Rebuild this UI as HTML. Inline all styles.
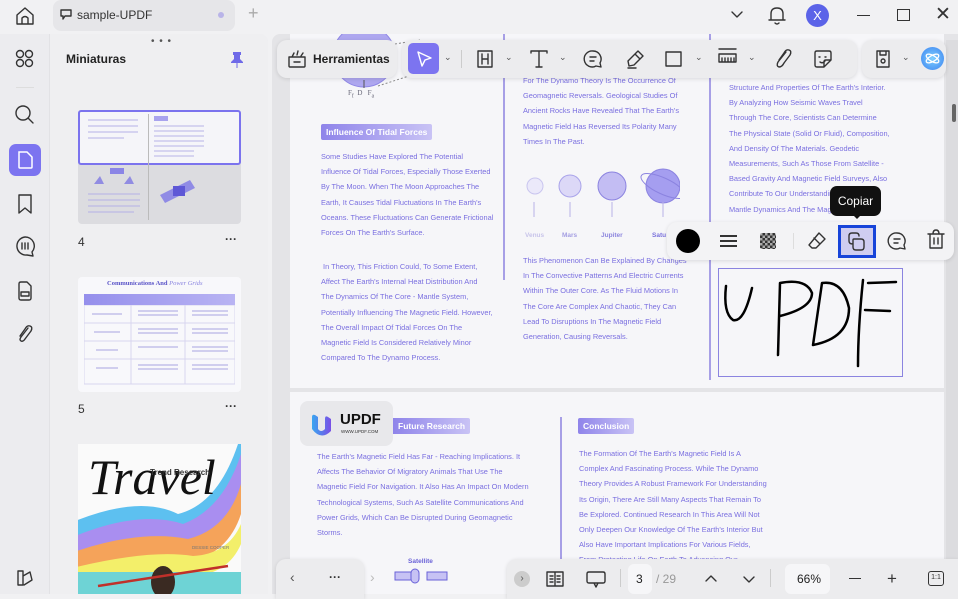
<!DOCTYPE html>
<html><head><meta charset="utf-8"><style>
*{margin:0;padding:0;box-sizing:border-box}
body{width:958px;height:594px;overflow:hidden;background:#f1f1f3;font-family:"Liberation Sans",sans-serif;position:relative}
.a{position:absolute}
.t{color:#7a6fe0;font-size:7.4px;line-height:15.2px;white-space:nowrap}
.h{background:linear-gradient(90deg,#8f84ea,#c9c3f5);color:#fff;font-weight:bold;font-size:8.5px;padding:3px 5px;border-radius:2px}
.ic{stroke:#333;fill:none;stroke-width:1.4;stroke-linecap:round;stroke-linejoin:round}
.bar{background:#ececee;border-radius:10px;box-shadow:0 1px 4px rgba(0,0,0,.12)}
</style></head><body>
<!-- top bar -->
<svg class="a" style="left:14px;top:6px" width="22" height="20"><path class="ic" d="M3 9 L11 2 L19 9 V18 H3Z M8 18 V12 Q11 9 14 12 V18"/></svg>
<div class="a" style="left:53px;top:0;width:182px;height:31px;background:#e6e6e9;border-radius:8px"></div>
<svg class="a" style="left:60px;top:9px" width="12" height="12"><path class="ic" stroke-width="1" d="M1 1 H11 V7 H5 L3 10 V7 H1Z"/></svg>
<div class="a" style="left:77px;top:8px;font-size:12px;color:#333">sample-UPDF</div>
<div class="a" style="left:218px;top:12px;width:6px;height:6px;border-radius:3px;background:#b9b4e8"></div>
<div class="a" style="left:248px;top:3px;font-size:18px;color:#aaa;font-weight:200">+</div>
<svg class="a" style="left:730px;top:10px" width="14" height="10"><path class="ic" d="M2 2 L7 7 L12 2"/></svg>
<svg class="a" style="left:767px;top:5px" width="20" height="22"><path class="ic" d="M4 15 V9 Q4 3 10 3 Q16 3 16 9 V15 H4 M2 15 H18 M8 18 Q10 20 12 18"/></svg>
<div class="a" style="left:806px;top:4px;width:23px;height:23px;border-radius:12px;background:#5b63e8;color:#fff;font-size:13px;text-align:center;line-height:23px">X</div>
<div class="a" style="left:857px;top:15px;width:13px;height:1.4px;background:#333"></div>
<div class="a" style="left:897px;top:9px;width:13px;height:12px;border:1.4px solid #333"></div>
<div class="a" style="left:935px;top:3px;font-size:19px;color:#333">✕</div>
<!-- left rail -->
<div class="a" style="left:0;top:34px;width:268px;height:560px;background:#ececef;border-radius:0 8px 0 0"></div>
<div class="a" style="left:49px;top:34px;width:219px;height:560px;background:#efeff1;border-left:1px solid #e2e2e5;border-radius:0 8px 0 0"></div>
<svg class="a" style="left:15px;top:49px" width="20" height="20"><g class="ic" stroke-width="1.2"><circle cx="5" cy="5" r="3.5"/><circle cx="14" cy="5" r="3.5"/><circle cx="5" cy="14" r="3.5"/><circle cx="14" cy="14" r="3.5"/></g></svg>
<div class="a" style="left:16px;top:87px;width:18px;height:1px;background:#ddd"></div>
<svg class="a" style="left:14px;top:104px" width="22" height="22"><path class="ic" d="M9 2 A7 7 0 1 0 9 16 A7 7 0 1 0 9 2 M14 14 L19 19"/></svg>
<div class="a" style="left:9px;top:144px;width:32px;height:32px;border-radius:7px;background:#7c74f0"></div>
<svg class="a" style="left:15px;top:149px" width="20" height="22"><path stroke="#fff" fill="none" stroke-width="1.5" d="M4 3 H12 L17 8 V18 Q17 19 16 19 H5 Q4 19 4 18Z"/></svg>
<svg class="a" style="left:16px;top:193px" width="18" height="22"><path class="ic" d="M3 2 H15 V20 L9 15 L3 20Z"/></svg>
<svg class="a" style="left:13px;top:235px" width="24" height="24"><path class="ic" d="M12 2 A9 9 0 1 0 14 20 L20 21 L19 17 A9 9 0 0 0 12 2 M9 8 V14 M12 8 V14 M15 8 V14"/></svg>
<svg class="a" style="left:16px;top:280px" width="18" height="22"><path class="ic" d="M3 4 Q3 2 5 2 H11 L15 6 V18 Q15 20 13 20 H5 Q3 20 3 18Z M5 12 H13 V16 H5Z"/></svg>
<svg class="a" style="left:15px;top:323px" width="20" height="22"><path class="ic" d="M13 5 L6 14 Q4 17 6 18 Q8 19 10 16 L16 8 Q18 4 15 3 Q12 2 10 6 L5 13"/></svg>
<svg class="a" style="left:15px;top:568px" width="20" height="20"><path class="ic" d="M3 3 H8 V17 H3Z M8 8 L15 4 L17 12 L9 17"/></svg>
<div class="a" style="left:151px;top:36px;font-size:10px;color:#555;letter-spacing:1px">• • •</div>
<div class="a" style="left:66px;top:52px;font-size:12px;font-weight:bold;color:#222">Miniaturas</div>
<svg class="a" style="left:229px;top:51px" width="16" height="18"><path fill="#6f6ae8" d="M4 1 H12 V4 H11 V8 L14 11 V12 H2 V11 L5 8 V4 H4Z"/><path stroke="#6f6ae8" d="M8 12 V17"/></svg>
<!-- thumb 4 -->
<div class="a" style="left:78px;top:110px;width:163px;height:114px;background:#dcdce0;border-radius:4px"></div>
<div class="a" style="left:78px;top:110px;width:163px;height:55px;background:#f5f5f9;border:2px solid #7b73ee;border-radius:3px"></div>
<div class="a" style="left:148px;top:114px;width:1px;height:106px;background:#bbb"></div>
<svg class="a" style="left:155px;top:170px" width="50" height="45"><path fill="#7d77e6" d="M5 25 L35 10 L40 18 L10 33Z" opacity=".8"/><rect x="18" y="16" width="12" height="10" fill="#5e57d6"/></svg>
<svg class="a" style="left:84px;top:116px" width="60" height="100"><g stroke="#b5b1e6" stroke-width="1"><path d="M4 4 H54 M4 10 H54 M4 16 H54 M4 22 H40 M4 78 H56 M4 84 H56 M4 90 H56 M4 96 H50"/></g><rect x="26" y="52" width="14" height="6" fill="#8b85e6"/><path d="M10 68 L16 60 L20 68Z M40 68 L46 60 L50 68Z" fill="#918ce2"/></svg>
<svg class="a" style="left:154px;top:116px" width="80" height="45"><rect x="0" y="0" width="14" height="5" fill="#a8a3ee"/><g stroke="#b8b4e6" stroke-width="1"><path d="M0 10 H50 M0 15 H50 M0 20 H50 M0 25 H50 M0 30 H50 M0 35 H40 M0 40 H40"/></g></svg>
<div class="a" style="left:78px;top:235px;font-size:12px;color:#333">4</div>
<div class="a" style="left:225px;top:232px;font-size:12px;color:#333;font-weight:bold">···</div>
<!-- thumb 5 -->
<div class="a" style="left:78px;top:277px;width:163px;height:115px;background:#f8f8fb;border-radius:4px"></div>
<div class="a" style="left:107px;top:280px;font-size:6.5px;font-weight:bold;color:#5a54c8;font-family:'Liberation Serif',serif">Communications And <i style="color:#8a84e0;font-weight:normal">Power Grids</i></div>
<div class="a" style="left:84px;top:294px;width:151px;height:11px;background:linear-gradient(90deg,#958fec,#b9b4f3)"></div>
<svg class="a" style="left:84px;top:305px" width="151" height="80"><g stroke="#d8d6ef" fill="none"><rect x="0" y="0" width="151" height="79"/><path d="M0 18 H151 M0 36 H151 M0 54 H151 M47 0 V79 M101 0 V79"/></g><g stroke="#a9a4e0"><path d="M8 9 H38 M54 6 H94 M54 10 H94 M108 6 H144 M108 10 H144 M10 27 H36 M54 24 H94 M54 28 H94 M108 24 H144 M108 28 H144 M12 45 H34 M54 42 H94 M108 42 H144 M108 46 H144 M12 63 H34 M54 60 H94 M54 64 H94 M108 60 H144 M108 64 H144"/></g></svg>
<div class="a" style="left:78px;top:402px;font-size:12px;color:#333">5</div>
<div class="a" style="left:225px;top:399px;font-size:12px;color:#333;font-weight:bold">···</div>
<!-- thumb travel -->
<div class="a" style="left:78px;top:444px;width:163px;height:150px;background:#fafafa;overflow:hidden">
<svg width="163" height="150"><path d="M-10 80 Q60 50 100 70 Q140 60 160 0 L175 0 Q160 80 110 95 Q60 90 -10 120Z" fill="#5dc0f0"/><path d="M-10 95 Q60 65 105 80 Q145 65 163 10 V40 Q150 90 110 105 Q60 100 -10 130Z" fill="#a98ef0"/><path d="M-10 110 Q60 85 110 95 Q150 85 163 40 V70 Q150 110 110 118 Q60 110 -10 140Z" fill="#f5a35a"/><path d="M-10 125 Q70 105 115 112 Q150 110 163 80 V100 Q150 130 115 132 Q60 128 -10 150Z" fill="#f3ef6a"/><rect x="0" y="128" width="163" height="22" fill="#6ed3d5"/><ellipse cx="85" cy="138" rx="12" ry="16" fill="#3a2a22"/><path d="M20 142 L150 122" stroke="#c0302a" stroke-width="2.5"/></svg>
<div class="a" style="left:10px;top:8px;font-family:'Liberation Serif',serif;font-style:italic;font-size:50px;color:#111;line-height:50px">Travel</div>
<div class="a" style="left:72px;top:24px;font-size:8px;font-weight:bold;color:#333">Trend Research</div>
<div class="a" style="left:114px;top:101px;font-size:4.5px;color:#777">DESSIE COOPER</div>
</div>
<!-- document area -->
<div class="a" style="left:272px;top:34px;width:686px;height:560px;background:#e4e4e7;border-radius:8px 0 0 0"></div>
<div class="a" style="left:290px;top:34px;width:654px;height:354px;background:#f6f6f9"></div>
<div class="a" style="left:290px;top:392px;width:654px;height:202px;background:#f6f6f9"></div>
<div class="a" style="left:946px;top:40px;width:12px;height:554px;background:#dcdcdf"></div>
<div class="a" style="left:952px;top:104px;width:4px;height:18px;background:#666;border-radius:2px"></div>
<div class="a" style="left:503px;top:34px;width:1.5px;height:246px;background:#a79fe6"></div>
<div class="a" style="left:709px;top:34px;width:1.5px;height:346px;background:#a79fe6"></div>
<div class="a" style="left:560px;top:417px;width:1.5px;height:177px;background:#a79fe6"></div>
<!-- planet top-left -->
<svg class="a" style="left:320px;top:34px" width="130" height="64"><circle cx="44" cy="22" r="31" fill="#aea7ef" stroke="#8f87e6"/><path d="M75 10 L100 6 M58 52 L95 40 L110 30" stroke="#888" stroke-dasharray="2 2" fill="none"/><path d="M44 54 V46" stroke="#555"/></svg>
<div class="a" style="left:348px;top:89px;font-size:7px;color:#667;font-family:'Liberation Serif',serif">F<sub>f</sub>&nbsp;&nbsp;D&nbsp;&nbsp;&nbsp;F<sub>a</sub></div>
<div class="a h" style="left:321px;top:124px">Influence Of Tidal Forces</div>
<div class="a t" style="left:321px;top:149px">Some Studies Have Explored The Potential<br>Influence Of Tidal Forces, Especially Those Exerted<br>By The Moon. When The Moon Approaches The<br>Earth, It Causes Tidal Fluctuations In The Earth's<br>Oceans. These Fluctuations Can Generate Frictional<br>Forces On The Earth's Surface.</div>
<div class="a t" style="left:321px;top:259px">&nbsp;In Theory, This Friction Could, To Some Extent,<br>Affect The Earth's Internal Heat Distribution And<br>The Dynamics Of The Core - Mantle System,<br>Potentially Influencing The Magnetic Field. However,<br>The Overall Impact Of Tidal Forces On The<br>Magnetic Field Is Considered Relatively Minor<br>Compared To The Dynamo Process.</div>
<div class="a t" style="left:523px;top:73px">For The Dynamo Theory Is The Occurrence Of<br>Geomagnetic Reversals. Geological Studies Of<br>Ancient Rocks Have Revealed That The Earth's<br>Magnetic Field Has Reversed Its Polarity Many<br>Times In The Past.</div>
<svg class="a" style="left:520px;top:165px" width="160" height="80"><g stroke="#8b83e0" stroke-width="1"><circle cx="15" cy="21" r="8" fill="#ebe9fa" stroke="#c9c5ef"/><circle cx="50" cy="21" r="11" fill="#dcd8f7" stroke="#a9a3ea"/><circle cx="92" cy="21" r="14" fill="#c3bdf3"/><circle cx="143" cy="21" r="17" fill="#a59ef0"/><ellipse cx="143" cy="21" rx="24" ry="8" fill="none" transform="rotate(25 143 21)"/><path d="M14 37 V52 M50 37 V52 M92 37 V52 M143 37 V52" stroke="#b8b3e8"/></g></svg>
<div class="a" style="left:525px;top:232px;font-size:6.5px;font-weight:bold;color:#c8c4ea">Venus</div>
<div class="a" style="left:562px;top:232px;font-size:6.5px;font-weight:bold;color:#a49ee2">Mars</div>
<div class="a" style="left:601px;top:232px;font-size:6.5px;font-weight:bold;color:#8c85de">Jupiter</div>
<div class="a" style="left:652px;top:232px;font-size:6.5px;font-weight:bold;color:#7a71dc">Satu</div>
<div class="a t" style="left:523px;top:253px">This Phenomenon Can Be Explained By Changes<br>In The Convective Patterns And Electric Currents<br>Within The Outer Core. As The Fluid Motions In<br>The Core Are Complex And Chaotic, They Can<br>Lead To Disruptions In The Magnetic Field<br>Generation, Causing Reversals.</div>
<div class="a t" style="left:729px;top:80px">Structure And Properties Of The Earth's Interior.<br>By Analyzing How Seismic Waves Travel<br>Through The Core, Scientists Can Determine<br>The Physical State (Solid Or Fluid), Composition,<br>And Density Of The Materials. Geodetic<br>Measurements, Such As Those From Satellite -<br>Based Gravity And Magnetic Field Surveys, Also<br>Contribute To Our Understanding<br>Mantle Dynamics And The Magn</div>
<!-- signature -->
<div class="a" style="left:718px;top:268px;width:185px;height:109px;border:1px solid #8b84e0"></div>
<svg class="a" style="left:718px;top:268px" width="185" height="109"><g stroke="#000" stroke-width="2.5" fill="none" stroke-linecap="round" stroke-linejoin="round"><path d="M8 18 Q5 45 15 52 Q26 55 34 20"/><path d="M60 87 L62 15 Q88 10 94 25 Q94 40 62 48"/><path d="M95 77 L104 15 Q125 12 131 40 Q131 70 95 77"/><path d="M145 12 Q140 60 140 98 M150 15 L178 14 M147 42 L172 43"/></g></svg>
<!-- page 2 -->
<div class="a" style="left:300px;top:401px;width:93px;height:45px;background:#e8e8eb;border-radius:8px"></div>
<svg class="a" style="left:309px;top:411px" width="26" height="26"><defs><linearGradient id="g" x1="0" x2="1"><stop offset="0" stop-color="#3aa6f0"/><stop offset="1" stop-color="#7a4fe6"/></linearGradient></defs><path d="M3 6 Q3 3 6 4 L9 6 V18 Q12 22 16 18 V8 Q16 4 19 6 L22 8 V20 Q12 30 3 18Z" fill="url(#g)"/></svg>
<div class="a" style="left:340px;top:411px;font-size:15px;font-weight:bold;color:#111">UPDF</div>
<div class="a" style="left:341px;top:429px;font-size:4.5px;color:#333">WWW.UPDF.COM</div>
<div class="a h" style="left:393px;top:418px;border-radius:0 2px 2px 0">Future Research</div>
<div class="a h" style="left:578px;top:418px">Conclusion</div>
<div class="a t" style="left:317px;top:449px">The Earth's Magnetic Field Has Far - Reaching Implications. It<br>Affects The Behavior Of Migratory Animals That Use The<br>Magnetic Field For Navigation. It Also Has An Impact On Modern<br>Technological Systems, Such As Satellite Communications And<br>Power Grids, Which Can Be Disrupted During Geomagnetic<br>Storms.</div>
<div class="a t" style="left:579px;top:446px">The Formation Of The Earth's Magnetic Field Is A<br>Complex And Fascinating Process. While The Dynamo<br>Theory Provides A Robust Framework For Understanding<br>Its Origin, There Are Still Many Aspects That Remain To<br>Be Explored. Continued Research In This Area Will Not<br>Only Deepen Our Knowledge Of The Earth's Interior But<br>Also Have Important Implications For Various Fields,<br>From Protecting Life On Earth To Advancing Our</div>
<div class="a" style="left:408px;top:558px;font-size:6.5px;font-weight:bold;color:#6a62d8">Satellite</div>
<svg class="a" style="left:368px;top:568px" width="80" height="26"><g fill="#c7c2f4" stroke="#6a62d8"><rect x="27" y="4" width="16" height="8"/><rect x="59" y="4" width="20" height="8"/><rect x="43" y="1" width="8" height="14" rx="4"/></g></svg>
<!-- top toolbar -->
<div class="a bar" style="left:277px;top:40px;width:120px;height:38px"></div>
<svg class="a" style="left:286px;top:49px" width="22" height="20"><path class="ic" d="M3 8 H19 V17 Q19 18 18 18 H4 Q3 18 3 17Z M8 13 H14 M6 8 L8 4 M11 6 L12 2 M15 7 L17 4"/></svg>
<div class="a" style="left:313px;top:52px;font-size:12px;font-weight:bold;color:#222">Herramientas</div>
<div class="a bar" style="left:402px;top:40px;width:455px;height:38px;border-radius:10px"></div>
<div class="a" style="left:408px;top:43px;width:31px;height:31px;background:#7c74f0;border-radius:5px"></div>
<svg class="a" style="left:414px;top:49px" width="20" height="20"><path stroke="#fff" fill="none" stroke-width="1.4" stroke-linejoin="round" d="M4 3 L17 9 L11 11 L8 17Z"/></svg>
<div class="a" style="left:444px;top:52px;font-size:9px;color:#555">⌄</div>
<div class="a" style="left:461px;top:50px;width:1px;height:18px;background:#ccc"></div>
<svg class="a" style="left:475px;top:49px" width="20" height="20"><path class="ic" d="M3 2 H17 V18 H3Z M7 5 V15 M13 5 V15 M7 10 H13"/></svg>
<div class="a" style="left:505px;top:52px;font-size:9px;color:#555">⌄</div>
<svg class="a" style="left:528px;top:49px" width="22" height="20"><path class="ic" d="M3 4 V2 H19 V4 M11 2 V18 M8 18 H14"/></svg>
<div class="a" style="left:559px;top:52px;font-size:9px;color:#555">⌄</div>
<svg class="a" style="left:582px;top:48px" width="22" height="22"><path class="ic" d="M11 3 A8 8 0 1 0 14 18 L19 19 L18 15 A8 8 0 0 0 11 3 M8 9 H14 M8 13 H12"/></svg>
<svg class="a" style="left:624px;top:48px" width="22" height="22"><path class="ic" d="M14 3 L19 8 L10 17 L5 18 L4 13Z M11 6 L16 11 M4 20 H12"/></svg>
<svg class="a" style="left:664px;top:49px" width="20" height="20"><rect class="ic" x="2" y="3" width="15" height="14"/></svg>
<div class="a" style="left:695px;top:52px;font-size:9px;color:#555">⌄</div>
<svg class="a" style="left:716px;top:46px" width="24" height="24"><path class="ic" d="M3 3 H20 M3 8 H20 V16 H3Z M6 12 V16 M9 12 V16 M12 12 V16 M15 12 V16 M18 12 V16"/></svg>
<div class="a" style="left:748px;top:52px;font-size:9px;color:#555">⌄</div>
<svg class="a" style="left:772px;top:48px" width="22" height="22"><path class="ic" d="M14 4 L6 14 Q4 18 7 19 Q10 19 12 15 L18 7 Q20 3 17 2 Q14 1 12 5 L7 12"/></svg>
<svg class="a" style="left:812px;top:48px" width="22" height="22"><path class="ic" d="M5 3 H17 Q19 3 19 5 V12 L12 19 H5 Q3 19 3 17 V5 Q3 3 5 3 M7 9 H8 M13 9 H14 M8 14 Q11 16 13 13 M12 19 V14 Q12 12 14 12 H19"/></svg>
<div class="a bar" style="left:862px;top:40px;width:84px;height:38px"></div>
<svg class="a" style="left:873px;top:48px" width="20" height="22"><path class="ic" d="M4 3 H16 V19 H4Z M7 3 V7 H13 V3 M10 11 A2 2 0 1 0 10.1 11"/></svg>
<div class="a" style="left:902px;top:52px;font-size:9px;color:#555">⌄</div>
<div class="a" style="left:921px;top:47px;width:23px;height:23px;border-radius:12px;background:radial-gradient(circle,#7fd0ff,#3b82f0)"></div>
<svg class="a" style="left:924px;top:50px" width="17" height="17"><g stroke="#fff" fill="none" stroke-width="1.3"><ellipse cx="8.5" cy="8.5" rx="7" ry="3" transform="rotate(30 8.5 8.5)"/><ellipse cx="8.5" cy="8.5" rx="7" ry="3" transform="rotate(-30 8.5 8.5)"/></g></svg>
<!-- annotation popup -->
<div class="a" style="left:830px;top:186px;width:51px;height:30px;background:#111;border-radius:7px;color:#fff;font-size:12px;text-align:center;line-height:30px">Copiar</div>
<div class="a" style="left:852px;top:214px;width:0;height:0;border:5px solid transparent;border-top-color:#111"></div>
<div class="a bar" style="left:667px;top:222px;width:287px;height:38px;background:#f3f3f5"></div>
<div class="a" style="left:676px;top:229px;width:24px;height:24px;border-radius:12px;background:#000"></div>
<div class="a" style="left:720px;top:235px;width:17px;height:1.5px;background:#333;box-shadow:0 5px 0 #333,0 10px 0 #333"></div>
<div class="a" style="left:760px;top:233px;width:16px;height:16px;background:repeating-conic-gradient(#333 0 25%,#aaa 0 50%) 0 0/5px 5px;border-radius:2px"></div>
<div class="a" style="left:793px;top:233px;width:1px;height:16px;background:#ddd"></div>
<svg class="a" style="left:806px;top:230px" width="22" height="22"><path class="ic" d="M13 3 L19 9 L10 18 H6 L3 15Z M8 8 L14 14"/></svg>
<div class="a" style="left:838px;top:225px;width:38px;height:33px;border:3px solid #1744d9;background:#cfcdf0"></div>
<svg class="a" style="left:845px;top:230px" width="24" height="24"><path class="ic" d="M4 11 V6 Q4 3 7 3 H11 Q14 3 14 6 M9 9 H16 Q19 9 19 12 V17 Q19 20 16 20 H11 Q8 20 8 17 V10 Q8 9 9 9 M4 11 Q4 14 8 14"/></svg>
<svg class="a" style="left:885px;top:229px" width="24" height="24"><path class="ic" d="M12 4 A8 8 0 1 0 15 19 L20 20 L19 16 A8 8 0 0 0 12 4 M9 10 H15 M9 14 H13"/></svg>
<svg class="a" style="left:925px;top:228px" width="22" height="24"><path class="ic" d="M3 6 H19 M8 6 Q8 2 11 2 Q14 2 14 6 M5 6 V20 H17 V6 M9 10 V16 M13 10 V16"/></svg>
<!-- bottom bars -->
<div class="a bar" style="left:276px;top:559px;width:88px;height:40px;border-radius:10px 10px 0 0"></div>
<div class="a" style="left:290px;top:569px;font-size:14px;color:#555">‹</div>
<div class="a" style="left:329px;top:570px;font-size:12px;color:#333;font-weight:bold">···</div>
<div class="a" style="left:370px;top:569px;font-size:14px;color:#bbb">›</div>
<div class="a bar" style="left:507px;top:559px;width:451px;height:40px;border-radius:10px 0 0 0"></div>
<div class="a" style="left:514px;top:571px;width:16px;height:16px;border-radius:8px;background:#ccc;color:#555;font-size:10px;text-align:center;line-height:15px">›</div>
<svg class="a" style="left:544px;top:569px" width="22" height="20"><path class="ic" d="M3 3 H19 V17 H3Z M11 3 V17 M6 7 H9 M6 10 H9 M6 13 H9 M13 7 H16 M13 10 H16 M13 13 H16"/></svg>
<svg class="a" style="left:585px;top:569px" width="22" height="20"><path class="ic" d="M4 3 H18 Q20 3 20 5 V12 Q20 14 18 14 H4 Q2 14 2 12 V5 Q2 3 4 3 M9 14 L11 18 L13 14"/></svg>
<div class="a" style="left:620px;top:569px;width:1px;height:18px;background:#ccc"></div>
<div class="a" style="left:628px;top:564px;width:24px;height:30px;background:#f6f6f8;border-radius:6px"></div>
<div class="a" style="left:636px;top:572px;font-size:12px;color:#222">3</div>
<div class="a" style="left:656px;top:572px;font-size:12px;color:#999">/ 29</div>
<svg class="a" style="left:704px;top:574px" width="14" height="10"><path class="ic" d="M2 7 L7 2 L12 7"/></svg>
<svg class="a" style="left:742px;top:575px" width="14" height="10"><path class="ic" d="M2 2 L7 7 L12 2"/></svg>
<div class="a" style="left:770px;top:569px;width:1px;height:18px;background:#ccc"></div>
<div class="a" style="left:785px;top:564px;width:45px;height:30px;background:#f6f6f8;border-radius:6px"></div>
<div class="a" style="left:797px;top:572px;font-size:12px;color:#222">66%</div>
<div class="a" style="left:849px;top:578px;width:12px;height:1.4px;background:#333"></div>
<div class="a" style="left:887px;top:569px;font-size:17px;color:#333">+</div>
<div class="a" style="left:928px;top:571px;width:16px;height:15px;border:1.3px solid #333;border-radius:3px;font-size:7px;text-align:center;line-height:12px;color:#333">1:1</div>
</body></html>
